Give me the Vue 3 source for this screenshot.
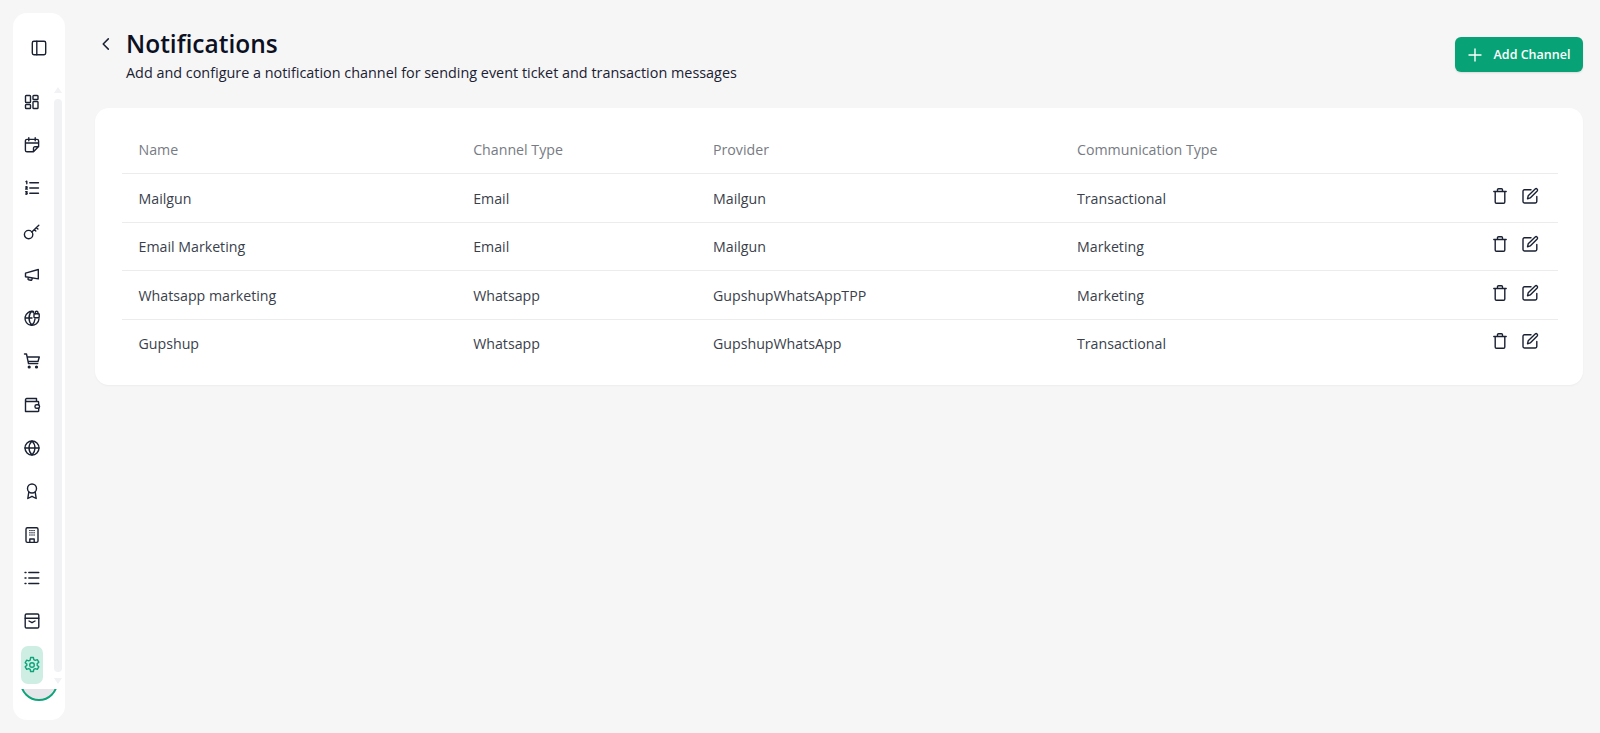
<script setup>
const rows = [
  { name: 'Mailgun', channel: 'Email', provider: 'Mailgun', comm: 'Transactional' },
  { name: 'Email Marketing', channel: 'Email', provider: 'Mailgun', comm: 'Marketing' },
  { name: 'Whatsapp marketing', channel: 'Whatsapp', provider: 'GupshupWhatsAppTPP', comm: 'Marketing' },
  { name: 'Gupshup', channel: 'Whatsapp', provider: 'GupshupWhatsApp', comm: 'Transactional' },
]
</script>

<template>
  <div class="page">
    <aside class="sidebar">
      <button class="toggle" aria-label="Toggle sidebar">
        <svg width="18" height="18" viewBox="0 0 18 18"><rect x="2.300" y="2.300" width="13.400" height="13.400" rx="1.600"/><path d="M6.800 2.300v13.400"/></svg>
      </button>
      <div class="scroll-wrap">
        <nav class="nav">
          <a class="nav-item"><svg viewBox="0 0 18 18"><rect x="2.500" y="2.500" width="5" height="7" rx=".8"/><rect x="10" y="2.500" width="5" height="4" rx=".8"/><rect x="2.500" y="11.500" width="5" height="4" rx=".8"/><rect x="10" y="8.500" width="5" height="7" rx=".8"/></svg></a>
          <a class="nav-item"><svg viewBox="0 0 18 18"><path d="M10.500 15.800H4a1.600 1.600 0 0 1-1.600-1.600V5A1.600 1.600 0 0 1 4 3.400h10A1.600 1.600 0 0 1 15.600 5v5.600zM10.500 15.800v-3.600a1.400 1.400 0 0 1 1.400-1.500h3.700M2.400 7h13.200M5.800 1.800v3M12.200 1.800v3"/></svg></a>
          <a class="nav-item"><svg viewBox="0 0 18 18"><path d="M6.800 3.800h8.700M6.800 9h8.700M6.800 14.200h8.700"/><path d="M3 2.600l.8-.4v2.600M2.700 8c.6-.7 1.700-.3 1.400.6-.2.500-1 .8-1.400 1.500h1.700M2.700 12.800h1.400l-.7 1c.8 0 1 .6.700 1-.3.400-1 .5-1.500.2"/></svg></a>
          <a class="nav-item"><svg viewBox="0 0 18 18"><circle cx="5.600" cy="11.600" r="4.200"/><path d="M8.800 8.900l7-6.700M11.300 6.600l1.500 1.500M13.400 4.600l1.500 1.500"/></svg></a>
          <a class="nav-item"><svg viewBox="0 0 18 18"><path d="M2.500 7.200l12.800-3.700v9.400L2.500 10.700zM5.400 11.400l-.4 1.500c-.1.500.2.800.6.900l2.400.5c.5.100.8-.1.900-.6l.2-1.100"/></svg></a>
          <a class="nav-item"><svg viewBox="0 0 18 18"><path d="M10.500 2.500A7 7 0 1 0 16 9.800M2 9h7M9 2c-4 3.500-4 10.500 0 14M9 2c.6.500 1.100 1.200 1.500 1.800M9 16c1.800-1.600 2.800-3.700 3-6"/><rect x="11" y="4.800" width="5.200" height="4" rx=".7"/><path d="M12.200 4.800V3.700a1.400 1.400 0 0 1 2.800 0v1.100"/></svg></a>
          <a class="nav-item"><svg viewBox="0 0 18 18"><path d="M1.500 2h2l2 9.600h9.300M4.300 5h12l-1.300 4.500H5"/><circle class="dot" cx="6.200" cy="15" r=".9"/><circle class="dot" cx="13.500" cy="15" r=".9"/></svg></a>
          <a class="nav-item"><svg viewBox="0 0 18 18"><path d="M13.500 5.500V2.500H3.800a1.300 1.300 0 0 0-1.300 1.400v11.600h12.600a.6.600 0 0 0 .6-.6v-2.600M2.500 4c0 1 .5 1.500 1.300 1.500H15a.6.600 0 0 1 .6.600v2.700"/><rect x="12" y="8.700" width="4.500" height="3.600" rx="1.600"/></svg></a>
          <a class="nav-item"><svg viewBox="0 0 18 18"><circle cx="9" cy="9" r="7"/><path d="M2 9h14M9 2c-4 4-4 10 0 14M9 2c4 4 4 10 0 14"/></svg></a>
          <a class="nav-item"><svg viewBox="0 0 18 18"><circle cx="9" cy="6.500" r="4.500"/><path d="M5.800 10.200L4.800 16.500l4.200-2.200 4.200 2.200-1-6.300"/></svg></a>
          <a class="nav-item"><svg viewBox="0 0 18 18"><rect x="3" y="1.800" width="12" height="14.600" rx="1.400"/><path class="thin" d="M6.500 4.600h.8M8.600 4.600h.8M10.700 4.600h.8M6.500 6.800h.8M8.600 6.800h.8M10.700 6.800h.8M6.500 9h.8M8.600 9h.8M10.700 9h.8"/><path d="M6.800 16.400v-3.400h4.400v3.400"/></svg></a>
          <a class="nav-item"><svg viewBox="0 0 18 18"><path d="M5.800 3.500h10M5.800 9h10M5.800 14.500h10"/><path d="M2 3.500h1M2 9h1M2 14.500h1"/></svg></a>
          <a class="nav-item"><svg viewBox="0 0 18 18"><rect x="2.200" y="2" width="13.600" height="14" rx="1.300"/><path d="M2.200 6.200h13.600M6 9l3 1.700L12 9"/></svg></a>
          <a class="nav-item active"><svg viewBox="0 0 18 18"><circle cx="9" cy="9" r="2.300"/><path d="M7.600 1.500h2.800l.4 2.100 1.500.8 2-.7 1.500 2.500-1.600 1.400v1.800l1.600 1.400-1.500 2.500-2-.7-1.500.8-.4 2.100H7.600l-.4-2.100-1.500-.8-2 .7-1.500-2.500 1.600-1.400V8.100L2.200 6.700l1.500-2.500 2 .7 1.500-.8z"/></svg></a>
        </nav>
        <div class="scrollbar">
          <span class="arrow up"></span>
          <span class="thumb"></span>
          <span class="arrow down"></span>
        </div>
      </div>
      <div class="avatar"></div>
    </aside>

    <main class="content">
      <header class="head">
        <div class="title-block">
          <div class="title-row">
            <svg class="back" width="16" height="16" viewBox="0 0 16 16"><path d="M10.300 2.900L5.200 8l5.100 5.100"/></svg>
            <h1>Notifications</h1>
          </div>
          <p>Add and configure a notification channel for sending event ticket and transaction messages</p>
        </div>
        <button class="add">
          <svg width="14" height="14" viewBox="0 0 14 14"><path d="M7 1v12M1 7h12"/></svg>
          <span>Add Channel</span>
        </button>
      </header>

      <section class="card">
        <div class="row header">
          <div>Name</div><div>Channel Type</div><div>Provider</div><div>Communication Type</div><div></div>
        </div>
        <div v-for="r in rows" :key="r.name" class="row">
          <div>{{ r.name }}</div>
          <div>{{ r.channel }}</div>
          <div>{{ r.provider }}</div>
          <div>{{ r.comm }}</div>
          <div class="actions">
            <svg width="18" height="18" viewBox="0 0 18 18"><path d="M2.800 4.500h12.400M6.500 4.500V2.800c0-.6.400-1 1-1h3c.6 0 1 .4 1 1v1.700M4.200 4.500v10.600c0 .7.500 1.200 1.200 1.200h7.200c.7 0 1.200-.5 1.200-1.200V4.500"/></svg>
            <svg width="18" height="18" viewBox="0 0 18 18"><path d="M15.800 9.500v5.100c0 .8-.6 1.400-1.400 1.400H3.400c-.8 0-1.400-.6-1.400-1.400V4.200c0-.8.600-1.400 1.400-1.400h6.600"/><path d="M6.500 11.800l.7-3 7-6.800c.6-.5 1.300-.5 1.800 0l.2.200c.5.500.5 1.200 0 1.800l-7 6.900z"/></svg>
          </div>
        </div>
      </section>
    </main>
  </div>
</template>

<style>
html, body { margin: 0; background: #f6f6f6; }
</style>

<style scoped>
.page {
  display: flex;
  height: 733px;
  overflow: hidden;
  background: #f6f6f6;
  font-family: "Open Sans", "Noto Sans", sans-serif;
  color: #0b1023;
  box-sizing: border-box;
  padding: 13px 17px 13px 13px;
  gap: 30px;
}
.sidebar {
  flex: 0 0 52px;
  width: 52px;
  height: 707px;
  background: #fff;
  border-radius: 14px;
  position: relative;
  overflow: hidden;
  display: flex;
  flex-direction: column;
}
svg { fill: none; stroke: #1a2133; stroke-width: 1.400; stroke-linecap: round; stroke-linejoin: round; display: block; }
.thin { stroke-width: 1; }
.dot { fill: #1a2133; }
.toggle {
  border: 0; background: none; padding: 0;
  height: 18px; width: 18px;
  margin: 26px 0 0 17px;
}
.scroll-wrap {
  position: relative;
  margin-top: 23px;
  flex: 1;
}
.nav { display: flex; flex-direction: column; align-items: flex-start; padding-left: 8px; width: 36px; position: relative; z-index: 1; }
.nav-item {
  width: 22px; height: 43.300px;
  display: flex; align-items: center; justify-content: center;
  border-radius: 7px;
}
.nav-item svg { width: 18px; height: 18px; }
.nav-item.active {
  background: #cfeee3;
  height: 38px;
  margin-top: 3px;
}
.nav-item.active svg { stroke: #0ea47a; }
.scrollbar {
  position: absolute;
  left: 41px; top: 7px;
  width: 8px; height: 597px;
  display: flex; flex-direction: column; align-items: center;
}
.thumb { flex: 1; width: 8px; background: #f1f2f4; border-radius: 4px; margin: 6px 0; }
.arrow { width: 0; height: 0; border-left: 4px solid transparent; border-right: 4px solid transparent; }
.arrow.up { border-bottom: 6px solid #f1f2f4; }
.arrow.down { border-top: 6px solid #f1f2f4; }
.avatar {
  position: absolute;
  left: 7px; top: 650px;
  width: 38px; height: 38px;
  box-sizing: border-box;
  border-radius: 50%;
  background: #e6e6ea;
  border: 2px solid #0ea47a;
  clip-path: inset(26px 0 0 0);
}
.content { flex: 1; min-width: 0; display: flex; flex-direction: column; }
.head { display: flex; justify-content: space-between; align-items: flex-start; height: 95px; }
.title-row { display: flex; align-items: center; gap: 12px; margin-top: 14px; margin-left: 3px; }
.back { stroke: #1a2133; stroke-width: 1.500; }
h1 { margin: 0; font-size: 24.500px; font-weight: 600; line-height: 34px; color: #0b1023; }
.title-block p { margin: 2px 0 0 31px; font-size: 14.400px; line-height: 20px; color: #1a2133; }
.add {
  margin-top: 24px;
  width: 128px; height: 35px;
  border: 0; border-radius: 6px;
  background: #07a376;
  color: #fff;
  font: 600 12.500px "Open Sans", sans-serif;
  display: flex; align-items: center; justify-content: center; gap: 12px;
  box-shadow: 0 1px 2px rgba(0,0,0,.12);
}
.add svg { stroke: #fff; stroke-width: 1.400; }
.card {
  background: #fff;
  border-radius: 14px;
  padding: 20px 25px 18px 27px;
  box-shadow: 0 1px 2px rgba(0,0,0,.04);
}
.row {
  display: grid;
  grid-template-columns: 334.700px 239.800px 364px 1fr 90px;
  align-items: center;
  height: 48.500px;
  box-sizing: border-box;
  padding: 1px 0 0 16.500px;
  border-top: 1px solid #ececec;
  font-size: 14.200px;
  color: #3a3f4c;
}
.row.header { border-top: 0; height: 45px; padding: 0 0 2px 16.500px; color: #777b84; }
.actions { display: flex; gap: 12px; justify-content: flex-end; padding-right: 19px; margin-top: -5px; }
</style>
